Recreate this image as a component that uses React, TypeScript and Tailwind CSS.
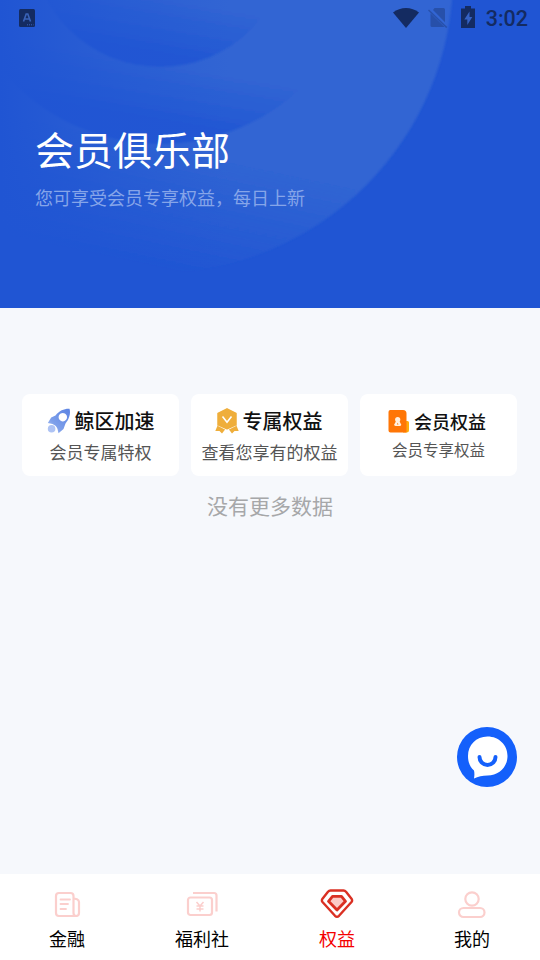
import type { ReactNode } from "react";

type Benefit = {
  title: string;
  desc: string;
  icon: ReactNode;
  className: string;
  titleClass: string;
  descClass: string;
};

type Tab = {
  label: string;
  icon: ReactNode;
  active?: boolean;
};

function HeroRings() {
  return (
    <svg className="absolute inset-0" width="540" height="308" viewBox="0 0 540 308">
      <defs>
        <linearGradient id="outer" gradientUnits="userSpaceOnUse" x1="160" y1="268" x2="185" y2="150">
          <stop offset="0" stopColor="#3165d3" stopOpacity="0" />
          <stop offset="1" stopColor="#3165d3" />
        </linearGradient>
        <linearGradient id="middle" gradientUnits="userSpaceOnUse" x1="160" y1="125" x2="170" y2="66">
          <stop offset="0" stopColor="#2156d3" />
          <stop offset="1" stopColor="#3165d3" />
        </linearGradient>
        <linearGradient id="inner" gradientUnits="userSpaceOnUse" x1="160" y1="58" x2="170" y2="0">
          <stop offset="0" stopColor="#2156d3" />
          <stop offset="1" stopColor="#3165d3" />
        </linearGradient>
        <linearGradient id="shade" x1="0" y1="0" x2="1" y2="0">
          <stop offset="0" stopColor="#2055d3" />
          <stop offset="0.12" stopColor="#2055d3" stopOpacity="0.85" />
          <stop offset="0.5" stopColor="#2055d3" stopOpacity="0.4" />
          <stop offset="1" stopColor="#2055d3" stopOpacity="0" />
        </linearGradient>
        <filter id="soft">
          <feGaussianBlur stdDeviation="1.2" />
        </filter>
      </defs>
      <g filter="url(#soft)">
        <circle cx="155" cy="-25" r="298" fill="url(#outer)" />
        <circle cx="160" cy="-62" r="206" fill="url(#middle)" />
        <circle cx="160" cy="-62" r="129" fill="url(#inner)" />
      </g>
      <rect width="230" height="308" fill="url(#shade)" />
    </svg>
  );
}

function StatusBar() {
  return (
    <div className="relative flex h-9 items-center justify-between pl-[19px] pr-3 text-[#142b61]">
      <svg width="16" height="18" viewBox="0 0 16 18">
        <rect width="16" height="18" rx="1.5" fill="currentColor" />
        <path d="M4.5 12.5 7.2 5h1.6l2.7 7.5M5.7 10h4.6" fill="none" stroke="#3a63b8" strokeWidth="1.6" />
        <path d="M8 15.8h6.5" stroke="#3a63b8" strokeWidth="1" strokeDasharray="1 1" />
      </svg>
      <div className="flex items-center">
        <svg width="26" height="22" viewBox="0 0 26 22">
          <path d="M0 5.5C7.5-.5 18.500-.5 26 5.500L13 21Z" fill="currentColor" />
        </svg>
        <svg className="ml-[9px] opacity-35" width="20" height="20" viewBox="0 0 20 20">
          <path d="M6.500 0H15.500Q17 0 17 1.500V14.200L5 2Z" fill="currentColor" />
          <path d="M2.500 5.300 16.500 19H4Q2.500 19 2.500 17.500Z" fill="currentColor" />
          <path d="m.5 2 18.200 17.500" stroke="currentColor" strokeWidth="1.500" />
        </svg>
        <svg className="ml-[13px] -mt-0.5" width="14" height="22" viewBox="0 0 14 22">
          <path d="M4 0h6v2.500h4V22H0V2.500h4Z" fill="currentColor" />
          <path d="M8.500 5.500 3.300 13.500H6.300V19L11.300 11H8.500Z" fill="#3562c4" />
        </svg>
        <span className="ml-[11px] mt-0.5 font-[Roboto,sans-serif] text-[21.5px] leading-none font-medium">3:02</span>
      </div>
    </div>
  );
}

function RocketIcon() {
  return (
    <svg width="24" height="26" viewBox="0 0 24 26">
      <defs>
        <linearGradient id="rocket" x1="1" y1="0" x2="0" y2="1">
          <stop offset="0" stopColor="#5b83e3" />
          <stop offset="0.65" stopColor="#7d9fea" />
          <stop offset="1" stopColor="#b7cbf6" />
        </linearGradient>
      </defs>
      <path
        fill="url(#rocket)"
        fillRule="evenodd"
        d="M22.500.8C17.500.5 12.500 2.500 8.500 7.500L4.200 9.500.8 15 5.500 16Q9.500 17.500 10.500 21L11.500 25.200 16.500 21 18.500 15.500C22 11.500 24 5.500 22.500.8ZM15.800 5a4.200 4.200 0 1 0 .01 0Z"
      />
      <circle cx="4.600" cy="20.800" r="3.800" fill="#aec3f4" />
    </svg>
  );
}

function MedalIcon() {
  return (
    <svg width="24" height="26" viewBox="0 0 24 26" fill="#efae3b">
      <path d="M3 16.500 10.500 21 7 25.500 4.500 23H.3Z" />
      <path d="M21 16.500 13.500 21 17 25.500 19.500 23h4.200Z" />
      <path d="m3 16 9 4.500 9-4.500v2l-9 4.500-9-4.500Z" fill="#fff" />
      <path
        d="m12 .8 9 4.500v11.500l-9 4-9-4V5.300Z"
        stroke="#efae3b"
        strokeWidth="1.500"
        strokeLinejoin="round"
      />
      <path d="m7.500 8.500 4.500 5.700 4.500-5.700" fill="none" stroke="#fff" strokeWidth="1.600" />
    </svg>
  );
}

function MemberIcon() {
  return (
    <svg width="22" height="23" viewBox="0 0 22 23">
      <path d="M15 11h4.500A1.500 1.500 0 0 1 21 12.500V20a2.500 2.500 0 0 1-2.500 2.500H15Z" fill="#ffac0b" />
      <path d="M2 0h13a3.500 3.500 0 0 1 3.500 3.500V22.500H2.500A2 2 0 0 1 .5 20.500V2A2 2 0 0 1 2 0Z" fill="#ff7606" />
      <circle cx="9.700" cy="9.500" r="2.600" fill="#fff0df" />
      <path d="M8.600 10h2.200l2.200 4.200a1.300 1.300 0 0 1-1.200 1.800H7.600a1.300 1.300 0 0 1-1.200-1.800Z" fill="#fff0df" />
      <path d="m9.700 12.800.8 1.700H8.900Z" fill="#ff7606" />
    </svg>
  );
}

const benefits: Benefit[] = [
  {
    title: "鲸区加速",
    desc: "会员专属特权",
    icon: <RocketIcon />,
    className: "pt-[13px]",
    titleClass: "ml-1 text-[20px]",
    descClass: "text-[17px] mt-[3px]",
  },
  {
    title: "专属权益",
    desc: "查看您享有的权益",
    icon: <MedalIcon />,
    className: "pt-[13px]",
    titleClass: "ml-1 mr-[2px] text-[20px]",
    descClass: "text-[17px] mt-[3px]",
  },
  {
    title: "会员权益",
    desc: "会员专享权益",
    icon: <MemberIcon />,
    className: "pt-[13px]",
    titleClass: "ml-1 mr-[3px] text-[18px]",
    descClass: "text-[15.5px]",
  },
];

const tabs: Tab[] = [
  {
    label: "金融",
    icon: (
      <svg width="32" height="32" viewBox="0 0 32 32" fill="none" stroke="#fbcfcd" strokeWidth="2.2">
        <path d="M22.500 8.500V24a3 3 0 0 0 3 3H8a3 3 0 0 1-3-3V7a3 3 0 0 1 3-3h11.500a3 3 0 0 1 3 3Z" strokeLinejoin="round" />
        <path d="m23 9.500 3 .8a3 3 0 0 1 2 2.700V24a3 3 0 0 1-3 3" />
        <path d="M9.500 10.500H19M9.500 15H17M9.500 20H15" strokeWidth="1.800" strokeLinecap="round" />
      </svg>
    ),
  },
  {
    label: "福利社",
    icon: (
      <svg width="32" height="32" viewBox="0 0 32 32" fill="none" stroke="#fbcfcd" strokeWidth="2.2">
        <rect x="2" y="8.500" width="24" height="17.500" rx="2.500" />
        <path d="M7 4h21a2.500 2.500 0 0 1 2.500 2.500V22.500" />
        <path d="m10.500 13 3.500 4 3.500-4M14 17v5.500M10.500 17h7M10.500 20h7" strokeWidth="1.500" />
      </svg>
    ),
  },
  {
    label: "权益",
    active: true,
    icon: (
      <svg width="34" height="32" viewBox="0 0 34 32" stroke="#da3023" strokeLinejoin="round">
        <path d="M10.500 1.500h13q1.500 0 2.500 1.200l5.500 7q1.200 1.800 0 3.300L19 26.800q-2 2-4 0L2.500 13q-1.200-1.500 0-3.300L8 2.700Q9 1.500 10.500 1.500Z" fill="none" strokeWidth="2.400" />
        <path d="M12.500 7.400h9l4 4.900L17 21l-8.500-8.700Z" fill="#fccbc7" strokeWidth="2.800" />
      </svg>
    ),
  },
  {
    label: "我的",
    icon: (
      <svg width="32" height="32" viewBox="0 0 32 32" fill="none" stroke="#fbcfcd" strokeWidth="2.2">
        <circle cx="16" cy="10" r="6.700" />
        <rect x="3" y="19" width="25.500" height="9" rx="4.500" />
      </svg>
    ),
  },
];

export default function App() {
  return (
    <div className="relative flex h-[960px] w-[540px] flex-col overflow-hidden bg-[#f6f8fc] font-['Noto_Sans_CJK_SC',sans-serif]">
      <header className="relative h-[308px] shrink-0 bg-[#2055d3]">
        <HeroRings />
        <StatusBar />
        <div className="relative pl-[35px] pt-[83px]">
          <h1 className="text-[39px] leading-[58px] text-white">会员俱乐部</h1>
          <p className="mt-[7px] text-[18px] leading-[27px] text-[#86a5e9]">您可享受会员专享权益，每日上新</p>
        </div>
      </header>

      <main className="flex-1 px-[22px] pt-[86px]">
        <div className="mr-px grid grid-cols-3 gap-3">
          {benefits.map((item) => (
            <div key={item.title} className={`h-[82px] rounded-lg bg-white text-center ${item.className}`}>
              <div className="flex h-7 items-center justify-center">
                {item.icon}
                <span className={`font-medium leading-7 text-[#111] ${item.titleClass}`}>{item.title}</span>
              </div>
              <p className={`leading-7 whitespace-nowrap text-[#555] ${item.descClass}`}>{item.desc}</p>
            </div>
          ))}
        </div>
        <p className="mt-[13px] text-center text-[21px] leading-8 text-[#a6a7a9]">没有更多数据</p>
      </main>

      <button className="absolute left-[457px] top-[727px] size-[60px]">
        <svg width="60" height="60" viewBox="0 0 60 60">
          <circle cx="30" cy="30" r="30" fill="#1460fb" />
          <path d="M30.500 9.500C42 9.500 50.500 18 50.500 29S42 48.500 30.500 48.500Q23 48.500 17 51.500 17.800 47 17 43.500C13 40 11 35 11 29 11 18 19 9.500 30.500 9.500Z" fill="#fff" />
          <path d="M22.500 30a8 8 0 0 0 16 0" fill="none" stroke="#1460fb" strokeWidth="4" strokeLinecap="round" />
        </svg>
      </button>

      <nav className="flex h-[86px] shrink-0 bg-white pt-[15px]">
        {tabs.map((tab) => (
          <div key={tab.label} className="flex flex-1 flex-col items-center pr-px">
            {tab.icon}
            <span className={`mt-1 text-[18px] leading-[26px] ${tab.active ? "text-[#f40000]" : "text-black"}`}>
              {tab.label}
            </span>
          </div>
        ))}
      </nav>
    </div>
  );
}
